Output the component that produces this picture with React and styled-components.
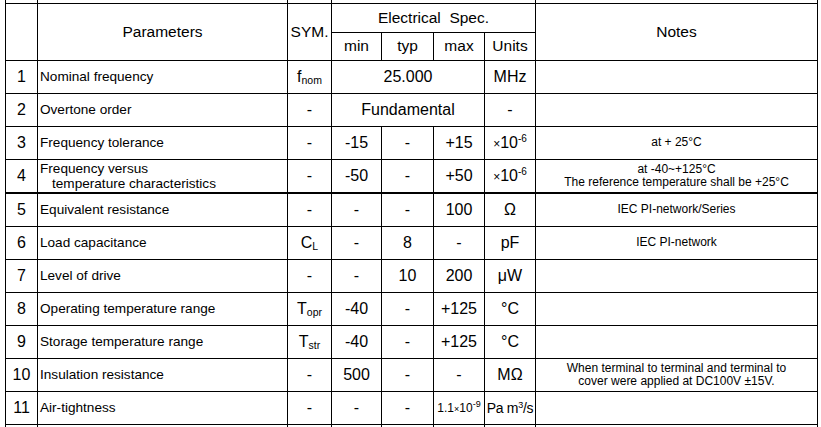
import React from "react";
import styled, { createGlobalStyle, css } from "styled-components";

const GlobalStyle = createGlobalStyle`
  body {
    margin: 0;
    background: #fff;
    color: #000;
    font-family: "Liberation Sans", Arial, sans-serif;
  }
`;

const Sheet = styled.div`
  height: 427px;
  overflow: hidden;
  padding-left: 5px;
`;

const SpecTable = styled.table`
  border-collapse: collapse;
  table-layout: fixed;
  width: 813px;
`;

const Col = styled.col`
  width: ${(p) => p.$w}px;
`;

const Row = styled.tr`
  height: ${(p) => p.$h || 33}px;
  ${(p) =>
    p.$thick &&
    css`
      & > td {
        border-bottom: 2px solid #000;
      }
    `}
`;

const cellBase = css`
  border: 1px solid #000;
  padding: 0;
  font-weight: normal;
  white-space: nowrap;
  vertical-align: middle;
`;

const HeadCell = styled.th`
  ${cellBase}
  font-size: 15.5px;
  line-height: 18px;
`;

const StubCell = styled.td`
  ${cellBase}
  ${(p) => (p.$top ? "border-top: none;" : "border-bottom: none;")}
`;

const NoCell = styled.td`
  ${cellBase}
  text-align: center;
  font-size: 16px;
`;

const ParamCell = styled.td`
  ${cellBase}
  text-align: left;
  padding-left: 2px;
  font-size: 13.6px;
  line-height: 15px;
`;

const ValueCell = styled.td`
  ${cellBase}
  text-align: center;
  font-size: ${(p) => p.$size || 16}px;
  letter-spacing: ${(p) => p.$tight || 0}px;
`;

const NoteCell = styled.td`
  ${cellBase}
  text-align: center;
  font-size: 12px;
  line-height: 13px;
`;

const Indent = styled.span`
  display: block;
  padding-left: 12px;
`;

const Sub = styled.span`
  font-size: 10.5px;
  vertical-align: -2px;
  line-height: 0;
`;

const Sup = styled.span`
  font-size: ${(p) => p.$size || 10}px;
  vertical-align: ${(p) => p.$lift || 6}px;
  line-height: 0;
`;

const Times = styled.span`
  font-size: ${(p) => p.$size || 12}px;
`;

const PPM = () => (
  <>
    <Times>×</Times>10<Sup>-6</Sup>
  </>
);

const widths = [32, 250, 44, 50, 52, 51, 51, 282];

const rows = [
  { no: "1", name: "Nominal frequency", sym: <>f<Sub>nom</Sub></>, span: "25.000", unit: "MHz" },
  { no: "2", name: "Overtone order", sym: "-", span: "Fundamental", unit: "-" },
  { no: "3", name: "Frequency tolerance", sym: "-", vals: ["-15", "-", "+15"], unit: <PPM />, note: "at + 25°C" },
  {
    no: "4",
    name: (
      <>
        Frequency versus
        <Indent>temperature characteristics</Indent>
      </>
    ),
    sym: "-",
    vals: ["-50", "-", "+50"],
    unit: <PPM />,
    note: (
      <>
        at -40~+125°C
        <br />
        The reference temperature shall be +25°C
      </>
    ),
    thick: true,
  },
  { no: "5", name: "Equivalent resistance", sym: "-", vals: ["-", "-", "100"], unit: "Ω", note: "IEC PI-network/Series" },
  { no: "6", name: "Load capacitance", sym: <>C<Sub>L</Sub></>, vals: ["-", "8", "-"], unit: "pF", note: "IEC PI-network" },
  { no: "7", name: "Level of drive", sym: "-", vals: ["-", "10", "200"], unit: "μW" },
  { no: "8", name: "Operating temperature range", sym: <>T<Sub>opr</Sub></>, vals: ["-40", "-", "+125"], unit: "°C" },
  { no: "9", name: "Storage temperature range", sym: <>T<Sub>str</Sub></>, vals: ["-40", "-", "+125"], unit: "°C" },
  {
    no: "10",
    name: "Insulation resistance",
    sym: "-",
    vals: ["500", "-", "-"],
    unit: "MΩ",
    note: (
      <>
        When terminal to terminal and terminal to
        <br />
        cover were applied at DC100V ±15V.
      </>
    ),
  },
  {
    no: "11",
    name: "Air-tightness",
    sym: "-",
    vals: [
      "-",
      "-",
      <>
        1.1<Times $size={9}>×</Times>10<Sup $size={9} $lift={5}>-9</Sup>
      </>,
    ],
    unitSize: 14,
    unitTight: -0.3,
    unit: (
      <>
        Pa m<Sup $size={9} $lift={5}>3</Sup>/s
      </>
    ),
  },
];

const App = () => (
  <Sheet>
    <GlobalStyle />
    <SpecTable>
      <colgroup>
        {widths.map((w, i) => (
          <Col key={i} $w={w} />
        ))}
      </colgroup>
      <tbody>
        <Row $h={3}>
          <StubCell $top />
          <StubCell $top />
          <StubCell $top />
          <StubCell $top colSpan={4} />
          <StubCell $top />
        </Row>
        <Row $h={29}>
          <HeadCell rowSpan={2} />
          <HeadCell rowSpan={2}>Parameters</HeadCell>
          <HeadCell rowSpan={2}>SYM.</HeadCell>
          <HeadCell colSpan={4}>Electrical&nbsp; Spec.</HeadCell>
          <HeadCell rowSpan={2}>Notes</HeadCell>
        </Row>
        <Row $h={28}>
          <HeadCell>min</HeadCell>
          <HeadCell>typ</HeadCell>
          <HeadCell>max</HeadCell>
          <HeadCell>Units</HeadCell>
        </Row>
        {rows.map((r) => (
          <Row key={r.no} $thick={r.thick} $h={r.thick ? 34 : 33}>
            <NoCell>{r.no}</NoCell>
            <ParamCell>{r.name}</ParamCell>
            <ValueCell>{r.sym}</ValueCell>
            {r.span ? (
              <ValueCell colSpan={3}>{r.span}</ValueCell>
            ) : (
              r.vals.map((v, i) => (
                <ValueCell key={i} $size={r.no === "11" && i === 2 ? 12 : 16}>
                  {v}
                </ValueCell>
              ))
            )}
            <ValueCell $size={r.unitSize} $tight={r.unitTight}>
              {r.unit}
            </ValueCell>
            <NoteCell>{r.note}</NoteCell>
          </Row>
        ))}
        <Row $h={20}>
          {widths.map((w, i) => (
            <StubCell key={i} />
          ))}
        </Row>
      </tbody>
    </SpecTable>
  </Sheet>
);

export default App;
